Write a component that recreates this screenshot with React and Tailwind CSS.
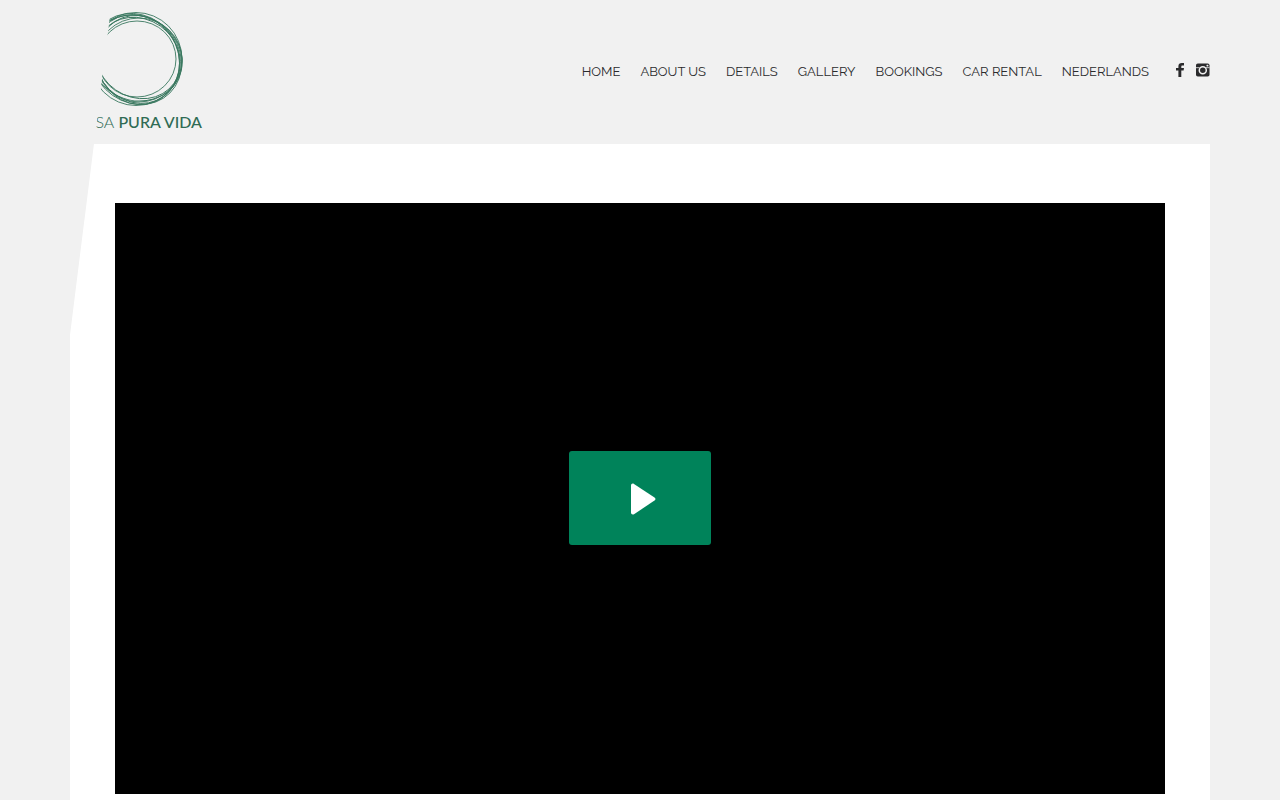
const links = [
  "Home",
  "About us",
  "Details",
  "Gallery",
  "Bookings",
  "Car rental",
  "Nederlands",
];

const rings = [
  { cx: 66, cy: 59, rx: 46, ry: 46.5, turn: 0 },
  { cx: 66, cy: 59, rx: 48, ry: 43, turn: 45 },
  { cx: 67, cy: 59, rx: 46, ry: 41, turn: 55 },
  { cx: 66, cy: 58, rx: 47, ry: 42, turn: 25 },
  { cx: 68, cy: 60, rx: 45, ry: 41, turn: 70 },
  { cx: 68, cy: 58, rx: 44, ry: 39, turn: 35 },
  { cx: 69, cy: 60, rx: 43, ry: 42, turn: 0 },
  { cx: 67, cy: 59, rx: 39, ry: 38, turn: 0 },
];

function Logo() {
  return (
    <svg width="134" height="144" viewBox="0 0 134 144" role="img" aria-label="Casa Pura Vida">
      <g fill="none" stroke="#3a7860" strokeWidth="0.9">
        {rings.map((r, i) => (
          <ellipse
            key={i}
            cx={r.cx}
            cy={r.cy}
            rx={r.rx}
            ry={r.ry}
            transform={`rotate(${r.turn} ${r.cx} ${r.cy})`}
          />
        ))}
      </g>
      <text
        x="132"
        y="128"
        textAnchor="end"
        className="fill-[#2f6b54] font-['Lato','Liberation_Sans',sans-serif] text-[16px]"
      >
        <tspan className="font-light">CASA</tspan> <tspan className="font-medium">PURA VIDA</tspan>
      </text>
    </svg>
  );
}

function FacebookIcon() {
  return (
    <svg width="8" height="14" viewBox="0 0 8 14" fill="currentColor" aria-hidden="true">
      <path d="M8 0v2.4H6.5C5.6 2.4 5.300 2.800 5.300 3.500V5H8L7.600 7.400H5.300V14H2.400V7.400H0V5h2.400V3.200C2.400 1.100 3.700 0 5.800 0z" />
    </svg>
  );
}

function InstagramIcon() {
  return (
    <svg width="14" height="14" viewBox="0 0 14 14" aria-hidden="true">
      <rect y="0.500" width="13.500" height="13" rx="1.800" fill="currentColor" />
      <path d="M0 4.700h3.600M10 4.700h3.500" stroke="#f1f1f1" strokeWidth="0.800" />
      <circle cx="6.800" cy="7.200" r="3.500" fill="currentColor" stroke="#f1f1f1" strokeWidth="1.500" />
      <rect x="10.500" y="1.700" width="1.900" height="1.800" rx="0.400" fill="#f1f1f1" />
    </svg>
  );
}

export default function App() {
  return (
    <div className="min-h-screen bg-[#f1f1f1] px-[70px] font-['Raleway','Lato','Liberation_Sans',sans-serif] text-[#2a2a2c]">
      {/* the slanted left edge cuts through both the logo and the white panel */}
      <div className="[clip-path:polygon(42px_0,100%_0,100%_100%,0_100%,0_335px)]">
        <header className="flex h-36 items-center justify-between">
          <a href="#home">
            <Logo />
          </a>
          <div className="flex items-center">
            <nav>
              <ul className="flex gap-5 text-[13px] leading-5 uppercase">
                {links.map((link) => (
                  <li key={link}>
                    <a href="#" className="whitespace-nowrap">
                      {link}
                    </a>
                  </li>
                ))}
              </ul>
            </nav>
            <div className="ml-[27px] flex items-center gap-3 pb-1">
              <a href="#facebook" aria-label="Facebook">
                <FacebookIcon />
              </a>
              <a href="#instagram" aria-label="Instagram">
                <InstagramIcon />
              </a>
            </div>
          </div>
        </header>

        <main className="bg-white px-[45px] pt-[59px] pb-10">
          <div className="flex aspect-video w-full items-center justify-center bg-black">
            <button
              type="button"
              aria-label="Play video"
              className="flex h-[94px] w-[142px] items-center justify-center rounded-[3px] bg-[#00835a] text-white"
            >
              <svg width="32" height="34" viewBox="-6 -2 32 34" fill="currentColor" aria-hidden="true">
                <path d="M1 2.500C1 .6 2.600 0 4 .9L24.500 14.600c1.300.9 1.300 2.100 0 3L4 31.200C2.600 32 1 31.400 1 29.600z" />
              </svg>
            </button>
          </div>
        </main>
      </div>
    </div>
  );
}
